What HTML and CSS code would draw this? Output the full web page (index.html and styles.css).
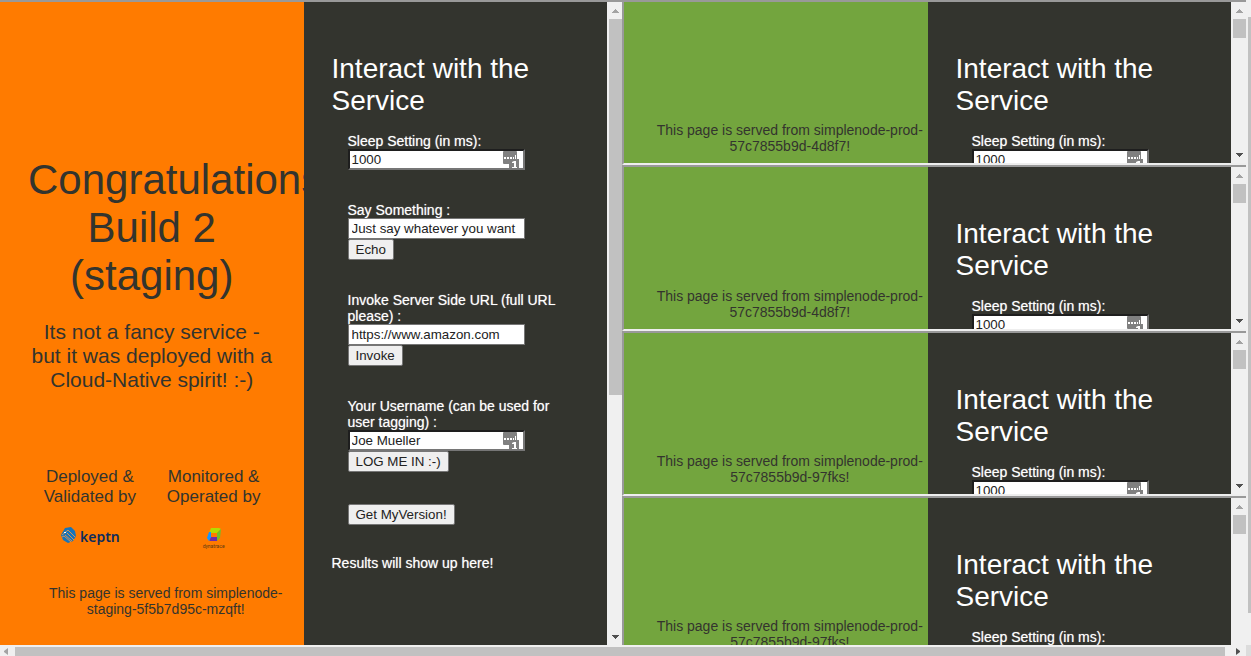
FILE: index.html
```html
<!DOCTYPE html>
<html lang="en">
<head>
<meta charset="utf-8">
<title>Simplenode deployments</title>
<link rel="stylesheet" href="styles.css">
</head>
<body>
<svg class="defs" aria-hidden="true">
  <symbol id="up" viewBox="0 0 8 5"><path d="M0 4h7v-1h-1v-1h-1v-1h-1v-1h-1v1h-1v1h-1v1h-1z"/></symbol>
  <symbol id="down" viewBox="0 0 8 5"><path d="M0 0h7v1h-1v1h-1v1h-1v1h-1v-1h-1v-1h-1v-1h-1z"/></symbol>
  <symbol id="fill" viewBox="0 0 16 17">
    <path fill="#808080" d="M1 0h12a1 1 0 0 1 1 1v7h2v9H6v-4H1a1 1 0 0 1-1-1V1a1 1 0 0 1 1-1z"/>
    <path fill="#fff" d="M1 6h2v2H1zM4 6h2v2H4zM7 6h2v2H7zM10 6h1v2h-1zM12 4h1v4h-1zM9 11l2-1h2v6h1v1H9v-1h2v-4H9z"/>
  </symbol>
</svg>
<div class="window">
  <main class="frames">
    <section class="frame frame-staging">
      <div class="panel staging">
        <h1>Congratulations! Build 2 (staging)</h1>
        <p class="lead">Its not a fancy service - but it was deployed with a Cloud-Native spirit! :-)</p>
        <div class="credits">
          <div class="credit">
            <p>Deployed &amp; Validated by</p>
            <div class="keptn">
              <svg width="16" height="16" viewBox="0 0 16 16"><path fill="#1674ba" d="M5 1l6-1 4 4 1 5-3 5-5 2-5-3-2-5z"/><path fill="none" stroke="#ff9a42" stroke-width=".8" d="M2 8l6-5 7 7M2 10l2-1 7 6M5 8l7 6M7 6l7 7"/><path fill="#fff" d="M4 5h2v1H4z"/></svg>
              <span>keptn</span>
            </div>
          </div>
          <div class="credit">
            <p>Monitored &amp; Operated by</p>
            <div class="dynatrace">
              <svg width="14" height="14" viewBox="0 0 14 14"><path fill="#b4dc00" d="M4 0h8l2 1-4 4H2z"/><path fill="#73be28" d="M14 1l-1 9-3 3V5z"/><path fill="#6f2da8" d="M4 9h6v4H3L2 12z"/><path fill="#1496ff" d="M2 4h2v5l-2 4-2-3z"/></svg>
              <span>dynatrace</span>
            </div>
          </div>
        </div>
        <p class="served">This page is served from simplenode-staging-5f5b7d95c-mzqft!</p>
      </div>
      <div class="panel service">
        <h2>Interact with the Service</h2>
        <form>
          <div class="field">
            <label for="sleep">Sleep Setting (in ms):</label>
            <div class="entry"><input class="inset" id="sleep" type="text" value="1000"><svg class="fill"><use href="#fill"/></svg></div>
          </div>
          <div class="field">
            <label for="say">Say Something :</label>
            <div class="entry"><input id="say" type="text" value="Just say whatever you want"></div>
            <button type="button">Echo</button>
          </div>
          <div class="field">
            <label for="url">Invoke Server Side URL (full URL please) :</label>
            <div class="entry"><input id="url" type="text" value="https://www.amazon.com"></div>
            <button type="button">Invoke</button>
          </div>
          <div class="field">
            <label for="user">Your Username (can be used for user tagging) :</label>
            <div class="entry"><input class="inset" id="user" type="text" value="Joe Mueller"><svg class="fill"><use href="#fill"/></svg></div>
            <button type="button">LOG ME IN :-)</button>
          </div>
          <div class="field"><button type="button">Get MyVersion!</button></div>
        </form>
        <p class="results">Results will show up here!</p>
      </div>
      <div class="scroll"><svg class="up"><use href="#up"/></svg><div class="track"><div class="thumb thumb-long"></div></div><svg class="down"><use href="#down"/></svg></div>
    </section>
    <div class="prod">
      <section class="frame">
        <div class="panel production"><p class="served">This page is served from simplenode-prod-57c7855b9d-4d8f7!</p></div>
        <div class="panel service"><h2>Interact with the Service</h2>
          <div class="field indent"><label for="p1">Sleep Setting (in ms):</label><div class="entry"><input class="inset" id="p1" type="text" value="1000"><svg class="fill"><use href="#fill"/></svg></div></div></div>
        <div class="scroll"><svg class="up"><use href="#up"/></svg><div class="track"><div class="thumb"></div></div><svg class="down"><use href="#down"/></svg></div>
      </section>
      <section class="frame">
        <div class="panel production"><p class="served">This page is served from simplenode-prod-57c7855b9d-4d8f7!</p></div>
        <div class="panel service"><h2>Interact with the Service</h2>
          <div class="field indent"><label for="p2">Sleep Setting (in ms):</label><div class="entry"><input class="inset" id="p2" type="text" value="1000"><svg class="fill"><use href="#fill"/></svg></div></div></div>
        <div class="scroll"><svg class="up"><use href="#up"/></svg><div class="track"><div class="thumb"></div></div><svg class="down"><use href="#down"/></svg></div>
      </section>
      <section class="frame">
        <div class="panel production"><p class="served">This page is served from simplenode-prod-57c7855b9d-97fks!</p></div>
        <div class="panel service"><h2>Interact with the Service</h2>
          <div class="field indent"><label for="p3">Sleep Setting (in ms):</label><div class="entry"><input class="inset" id="p3" type="text" value="1000"><svg class="fill"><use href="#fill"/></svg></div></div></div>
        <div class="scroll"><svg class="up"><use href="#up"/></svg><div class="track"><div class="thumb"></div></div><svg class="down"><use href="#down"/></svg></div>
      </section>
      <section class="frame">
        <div class="panel production"><p class="served">This page is served from simplenode-prod-57c7855b9d-97fks!</p></div>
        <div class="panel service"><h2>Interact with the Service</h2>
          <div class="field indent"><label for="p4">Sleep Setting (in ms):</label><div class="entry"><input class="inset" id="p4" type="text" value="1000"><svg class="fill"><use href="#fill"/></svg></div></div></div>
        <div class="scroll"><svg class="up"><use href="#up"/></svg><div class="track"><div class="thumb"></div></div><svg class="down"><use href="#down"/></svg></div>
      </section>
    </div>
  </main>
  <div class="page-scroll-y"><div class="page-thumb-y"></div></div>
  <div class="page-scroll-x">
    <svg width="4" height="7" viewBox="0 0 4 7"><path fill="#a3a3a3" d="M4 0v7L0 4V3z"/></svg>
    <div class="page-thumb-x"></div>
    <svg width="4" height="7" viewBox="0 0 4 7"><path fill="#505050" d="M0 0v7l4-3V3z"/></svg>
  </div>
  <div class="corner"></div>
</div>
</body>
</html>
```
FILE: styles.css
```css
* { box-sizing: border-box; }
body {
  margin: 0;
  font-family: "Liberation Sans", Arial, sans-serif;
  font-size: 14px;
  line-height: 16px;
  color: #33342e;
}
h1, h2, p { margin: 0; font-weight: 400; }
.defs { display: none; }
.window {
  display: grid;
  grid-template-columns: minmax(0, 1fr) 5px;
  grid-template-rows: minmax(0, 1fr) 11px;
  height: 100vh;
  overflow: hidden;
  background: #f0f0f0;
}
.frames {
  display: grid;
  grid-template-columns: minmax(0, 622fr) minmax(0, 624fr);
  grid-template-rows: minmax(0, 1fr);
  min-height: 0;
  overflow: hidden;
}
.frame {
  display: grid;
  grid-template-columns: minmax(0, 1fr) minmax(0, 1fr) 15px;
  grid-template-rows: minmax(0, 1fr);
  min-height: 0;
  overflow: hidden;
  border-top: 2px solid #999;
}
.prod {
  display: grid;
  grid-template-rows: repeat(4, minmax(0, 1fr));
  height: calc(100% + 16px);
}
.prod .frame {
  border-left: 2px solid #999;
  border-bottom: 2px solid #eee;
}
.panel { min-height: 0; overflow: hidden; }
.staging { padding: 154px 28px 0; background: #ff7b00; text-align: center; }
.staging h1 { font-size: 42px; line-height: 48px; }
.lead { margin-top: 20px; font-size: 21px; line-height: 24px; }
.credits { display: grid; grid-template-columns: 1fr 1fr; margin-top: 75px; }
.credit { padding: 0 12px; font-size: 17px; line-height: 20px; }
.keptn { display: flex; justify-content: center; gap: 4px; height: 48px; padding-top: 20px; }
.keptn span { font-family: "Noto Sans", sans-serif; font-weight: 600; font-size: 14px; color: #0d2c5c; }
.dynatrace { display: flex; flex-direction: column; align-items: center; padding-top: 21px; }
.dynatrace span { font-family: Roboto, sans-serif; font-size: 5px; line-height: 8px; color: #5c3a15; }
.served { text-align: center; }
.staging .served { margin: 30px -28px 0 0; }
.production {
  display: flex;
  flex-direction: column;
  justify-content: flex-end;
  padding: 0 0 9px 28px;
  background: #73a53e;
}
.service { padding: 51px 28px 0; background: #33342e; color: #fff; }
.service h2 { margin-bottom: 16px; font-size: 28px; line-height: 32px; }
form, .indent { padding-left: 16px; }
.field { display: flex; flex-direction: column; align-items: flex-start; margin-bottom: 32px; }
.field label, .results { text-shadow: 0 0 1px rgba(255, 255, 255, 0.6); }
.entry { position: relative; width: 177px; height: 21px; }
input {
  display: block;
  width: 100%;
  height: 21px;
  padding: 2px 3px;
  border: 1px solid #767676;
  background: #fff;
  color: #222;
  font-family: inherit;
}
.inset { padding: 1px 2px; border: 2px solid #767676; border-top-color: #1e1e1e; border-left-color: #1e1e1e; }
.fill { position: absolute; top: 2px; right: 6px; width: 16px; height: 17px; }
button {
  height: 21px;
  padding: 1px 7px;
  border: 1px solid #767676;
  border-radius: 2px;
  background: #efefef;
  color: #222;
  font-family: inherit;
}
.results { margin-top: -2px; }
.scroll {
  display: flex;
  flex-direction: column;
  min-height: 0;
  background: #f0f0f0;
}
.scroll svg { flex: none; width: 8px; height: 5px; margin-left: 5px; }
.up { margin: 7px 0 5px; fill: #a3a3a3; }
.down { margin: 0 0 5px; fill: #505050; }
.track { flex: 1; min-height: 0; padding-left: 2px; }
.thumb { height: 19px; background: #c1c1c1; }
.thumb-long { height: 61%; }
.page-scroll-y { padding: 17px 0 32px 2px; }
.page-thumb-y { height: 100%; background: #c1c1c1; }
.page-scroll-x { display: flex; align-items: center; gap: 7px; padding: 2px 6px 0 4px; }
.page-scroll-x svg:last-child { margin-left: 4px; }
.page-thumb-x { flex: 1; height: 100%; background: #c1c1c1; }
.corner { background: #dcdcdc; }
```
